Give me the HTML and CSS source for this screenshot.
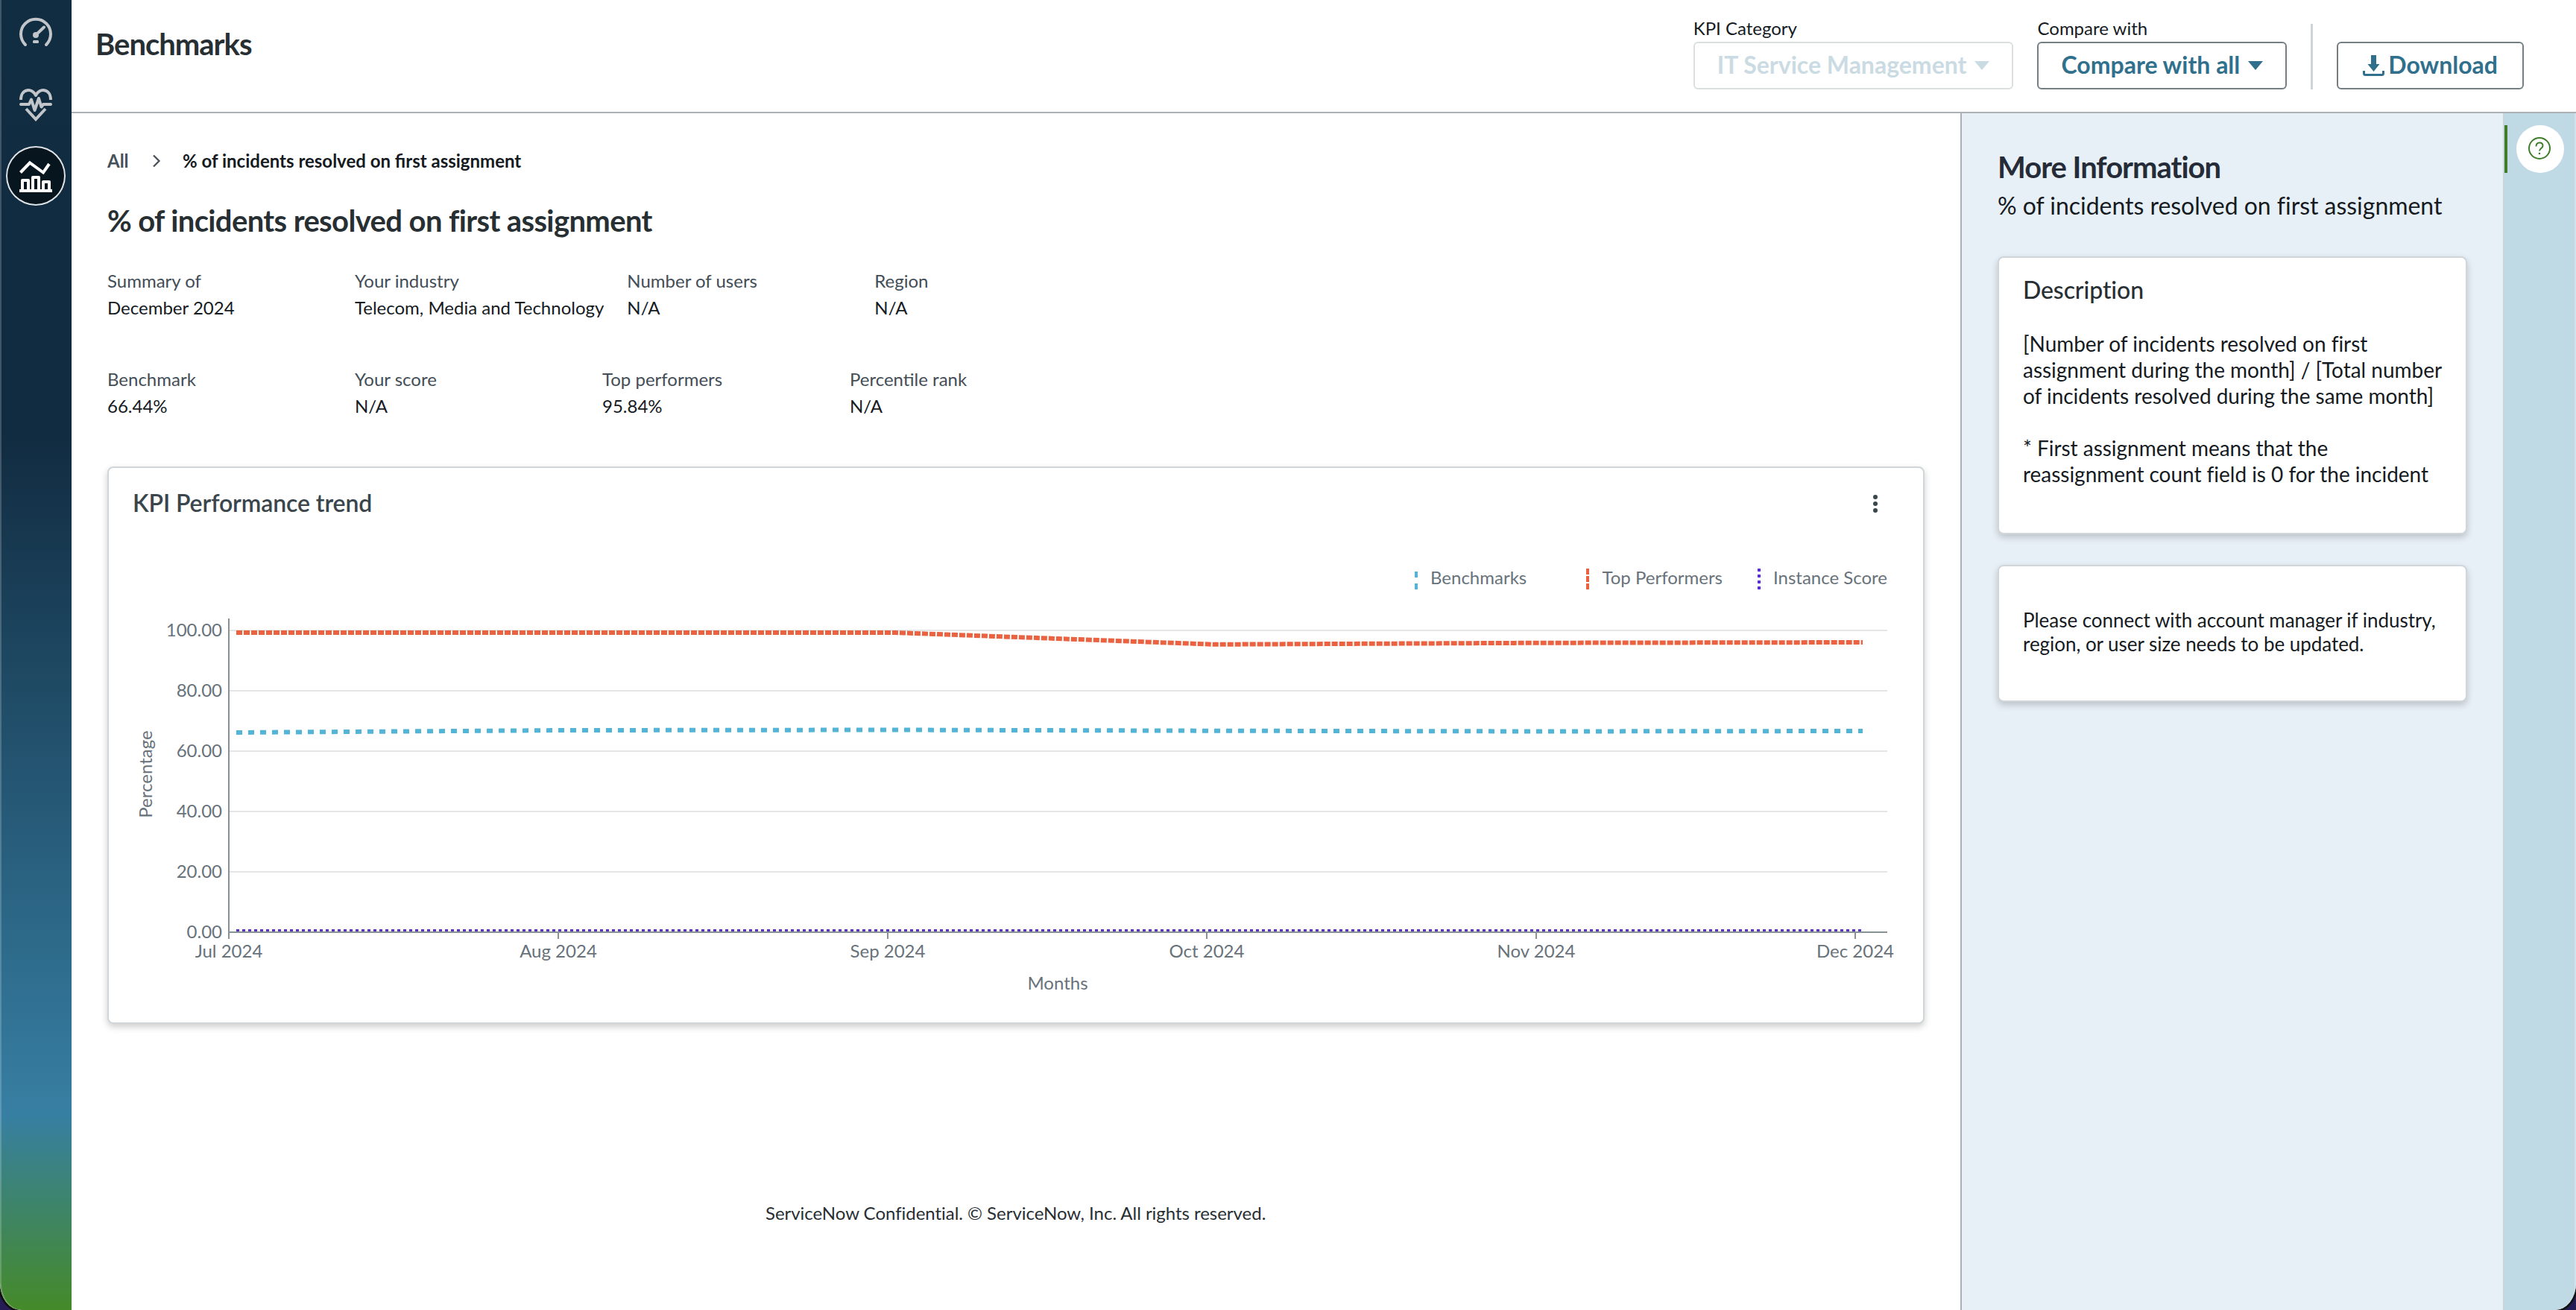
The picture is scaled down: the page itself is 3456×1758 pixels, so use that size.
FILE: index.html
```html
<!DOCTYPE html>
<html lang="en">
<head>
<meta charset="utf-8">
<title>Benchmarks</title>
<link rel="stylesheet" href="styles.css">
</head>
<body>
<div class="app">
  <nav class="sidebar">
    <a class="nav-item">
      <svg viewBox="0 0 80 80" fill="none" stroke="#c1c5ca" stroke-width="4" stroke-linecap="round">
        <path d="M26 56A20 20 0 1 1 54 56"/>
        <path d="M41 42L51 32.5"/>
        <circle cx="40" cy="43" r="4" fill="#c1c5ca" stroke="none"/>
        <rect x="36" y="50" width="8" height="4" rx="1.5" fill="#c1c5ca" stroke="none"/>
      </svg>
    </a>
    <a class="nav-item">
      <svg viewBox="0 0 80 80" fill="none" stroke="#c1c5ca" stroke-width="4" stroke-linejoin="round">
        <path d="M20 34C20 18 36 18 40 28C44 18 60 18 60 34"/>
        <path d="M20 40H31L34 33.5L38.5 48L44 32L47.5 43.5L50 40H60" stroke-linecap="round"/>
        <path d="M27 46L40 60L53 46" stroke-linejoin="miter"/>
      </svg>
    </a>
    <a class="nav-item nav-item-active">
      <svg viewBox="0 0 80 80" fill="none" stroke="#fff" stroke-width="4">
        <path d="M19.5 35.5L32 22.5L50 35.5L58 24"/>
        <path d="M18 60H62M22 60V46H30V60M36 60V42H44V60M50 60V48H58V60" stroke-linejoin="round"/>
      </svg>
    </a>
  </nav>

  <div class="page">
    <header class="topbar">
      <h1 class="topbar-title">Benchmarks</h1>
      <div class="controls">
        <div class="field">
          <span class="field-label">KPI Category</span>
          <button class="btn btn-disabled">IT Service Management<i class="caret"></i></button>
        </div>
        <div class="field">
          <span class="field-label">Compare with</span>
          <button class="btn">Compare with all<i class="caret"></i></button>
        </div>
        <span class="divider"></span>
        <button class="btn btn-download">
          <svg class="download-icon" viewBox="0 0 29 28"><path d="M11 0h7v12h4.5L14.5 22 6.500 12H11z" fill="currentColor"/><path d="M1.500 21v3.500q0 2 2 2h22q2 0 2-2V21" fill="none" stroke="currentColor" stroke-width="3"/></svg>
          Download
        </button>
      </div>
    </header>

    <div class="body">
      <main class="content">
        <div class="breadcrumb">
          <a class="crumb">All</a>
          <svg class="crumb-arrow" viewBox="0 0 12 18"><path d="M2 1.500L9.500 9 2 16.500" fill="none" stroke="#46505a" stroke-width="2.200"/></svg>
          <b>% of incidents resolved on first assignment</b>
        </div>
        <h2 class="kpi-title">% of incidents resolved on first assignment</h2>
        <div class="facts">
          <dl class="fact"><dt>Summary of</dt><dd>December 2024</dd></dl>
          <dl class="fact"><dt>Your industry</dt><dd>Telecom, Media and Technology</dd></dl>
          <dl class="fact"><dt>Number of users</dt><dd>N/A</dd></dl>
          <dl class="fact"><dt>Region</dt><dd>N/A</dd></dl>
        </div>
        <div class="facts">
          <dl class="fact"><dt>Benchmark</dt><dd>66.44%</dd></dl>
          <dl class="fact"><dt>Your score</dt><dd>N/A</dd></dl>
          <dl class="fact"><dt>Top performers</dt><dd>95.84%</dd></dl>
          <dl class="fact"><dt>Percentile rank</dt><dd>N/A</dd></dl>
        </div>

        <section class="card chart-card">
          <div class="chart-head">
            <h3 class="card-title">KPI Performance trend</h3>
            <svg class="kebab" viewBox="0 0 8 26" fill="#3a454c"><circle cx="4" cy="4" r="3"/><circle cx="4" cy="13" r="3"/><circle cx="4" cy="22" r="3"/></svg>
          </div>
          <svg class="chart" viewBox="146 730 2434 642">
            <g fill="none" stroke-width="4">
              <path d="M1900 791V766" stroke="#52b4d6" stroke-dasharray="8 8"/>
              <path d="M2130 791V762" stroke="#ec6240" stroke-dasharray="8 2"/>
              <path d="M2360 791V762" stroke="#5b30cf" stroke-dasharray="4 4"/>
            </g>
            <g class="chart-text">
              <text x="1919" y="784">Benchmarks</text>
              <text x="2149.500" y="784">Top Performers</text>
              <text x="2379" y="784">Instance Score</text>
            </g>
            <path d="M308 846H2532M308 927H2532M308 1008H2532M308 1089H2532M308 1170H2532" stroke="#e5e5e5" stroke-width="2"/>
            <g class="chart-text" text-anchor="end">
              <text x="298" y="854">100.00</text>
              <text x="298" y="935">80.00</text>
              <text x="298" y="1016">60.00</text>
              <text x="298" y="1097">40.00</text>
              <text x="298" y="1178">20.00</text>
              <text x="298" y="1259">0.00</text>
            </g>
            <g fill="none" stroke-width="6">
              <path d="M317 983L759 980L1201 979.500L1629 980.700L2071 981.500L2499 981" stroke="#52b4d6" stroke-dasharray="8 8"/>
              <path d="M317 849H1201L1629 864.800L2071 862.700L2499 862" stroke="#ec6240" stroke-dasharray="8 2"/>
              <path d="M317 1248.500H2499" stroke="#5b30cf" stroke-width="3" stroke-dasharray="4 4"/>
            </g>
            <path d="M307 830V1260M306 1251H2532M749 1252V1260M1191 1252V1260M1619 1252V1260M2061 1252V1260M2489 1252V1260" fill="none" stroke="#879196" stroke-width="2"/>
            <g class="chart-text" text-anchor="middle">
              <text x="307" y="1285">Jul 2024</text>
              <text x="749" y="1285">Aug 2024</text>
              <text x="1191" y="1285">Sep 2024</text>
              <text x="1619" y="1285">Oct 2024</text>
              <text x="2061" y="1285">Nov 2024</text>
              <text x="2489" y="1285">Dec 2024</text>
              <text x="1419" y="1328">Months</text>
              <text transform="translate(204 1039) rotate(-90)">Percentage</text>
            </g>
          </svg>
        </section>

        <footer class="footer">ServiceNow Confidential. © ServiceNow, Inc. All rights reserved.</footer>
      </main>

      <aside class="info">
        <h2 class="info-title">More Information</h2>
        <p class="info-sub">% of incidents resolved on first assignment</p>
        <section class="card info-card">
          <h3 class="card-title">Description</h3>
          <p class="desc">[Number of incidents resolved on first assignment during the month] / [Total number of incidents resolved during the same month]</p>
          <p class="desc">* First assignment means that the reassignment count field is 0 for the incident</p>
        </section>
        <section class="card note-card">
          <p class="note">Please connect with account manager if industry, region, or user size needs to be updated.</p>
        </section>
      </aside>

      <div class="rail">
        <span class="rail-mark"></span>
        <button class="rail-btn">
          <svg viewBox="0 0 64 64" fill="none" stroke="#3f7d2b" stroke-width="2">
            <circle cx="31" cy="31" r="14"/>
            <path d="M26.500 28.500Q26.500 23.500 31 23.500T35.500 27.800C35.500 31 31 31 31 34.500"/>
            <circle cx="31" cy="38" r="1.300" fill="#3f7d2b" stroke="none"/>
          </svg>
        </button>
      </div>
    </div>
  </div>
</div>
</body>
</html>
```
FILE: styles.css
```css
* { box-sizing: border-box; }
body, h1, h2, h3, p, dl, dt, dd { margin: 0; }
body {
  width: 3456px;
  height: 1758px;
  overflow: hidden;
  background: #251c55;
  font-family: Lato, "Liberation Sans", sans-serif;
  font-size: 24px;
  color: #161b1f;
}
svg { display: block; }

.app {
  display: flex;
  height: 1758px;
  border-radius: 0 0 28px 28px / 0 0 36px 36px;
  overflow: hidden;
  background: #fff;
  box-shadow: 0 0 0 3px #111;
}

.sidebar {
  width: 96px;
  flex: none;
  display: flex;
  flex-direction: column;
  align-items: center;
  gap: 16px;
  padding-top: 4px;
  border-radius: 0 0 0 28px / 0 0 0 36px;
  background: linear-gradient(#112d41, #112b40 33%, #377fa3 85%, #458a29);
  box-shadow: inset 2px 0 0 rgba(255, 255, 255, .2);
}
.nav-item { width: 80px; height: 80px; }
.nav-item-active {
  border-radius: 50%;
  background: #07151f;
  box-shadow: inset 0 0 0 2px #dde2e6;
}

.page { flex: 1; display: flex; flex-direction: column; }
.topbar {
  height: 152px;
  flex: none;
  display: flex;
  justify-content: space-between;
  padding: 21px 70px 0 32px;
  border-bottom: 2px solid #abb1b6;
}
.topbar-title {
  margin-top: 14px;
  font-size: 40px;
  line-height: 48px;
  letter-spacing: -1px;
  color: #272f33;
}
.controls { display: flex; gap: 32px; height: 99px; align-items: flex-end; }
.field { display: flex; flex-direction: column; gap: 2px; }
.field-label { line-height: 32px; }
.btn {
  display: flex;
  align-items: center;
  gap: 11px;
  height: 64px;
  padding: 0 30px 3px;
  border: 2px solid #747e83;
  border-radius: 6px;
  background: #fff;
  font: 700 32px Lato, "Liberation Sans", sans-serif;
  color: #30708c;
}
.btn-disabled { border-color: #dcdfe0; color: #cbdbe3; }
.caret {
  margin-top: 3px;
  border: 10px solid transparent;
  border-top: 12px solid currentColor;
  border-bottom: 0;
}
.btn-download { gap: 5px; padding-left: 33px; padding-right: 33px; }
.download-icon { width: 29px; height: 28px; margin-top: 3px; }
.divider { width: 3px; height: 88px; background: #d0d3d5; }

.body { flex: 1; display: flex; }
.content { flex: 1; padding: 48px 48px 0; }
.breadcrumb {
  display: flex;
  align-items: center;
  height: 32px;
  line-height: 32px;
}
.crumb { width: 60px; font-weight: 700; color: #46505a; }
.crumb-arrow { width: 12px; height: 18px; margin-right: 29px; }
.kpi-title {
  margin: 40px 0 39px;
  font-size: 40px;
  line-height: 48px;
  letter-spacing: -.62px;
  color: #272f33;
}
.facts { display: flex; gap: 31px; height: 132px; }
.fact { min-width: 301px; line-height: 36px; }
.fact dt { color: #434d56; }

.card {
  border: 2px solid #d0d6d9;
  border-radius: 8px;
  background: #fff;
  box-shadow: 0 4px 10px rgba(0, 0, 0, .2);
}
.card-title { font-size: 32px; line-height: 38px; font-weight: 600; color: #3a454c; }
.chart-card { width: 2438px; height: 748px; margin-top: 3px; }
.chart-head {
  height: 102px;
  display: flex;
  justify-content: space-between;
  padding: 28px 60px 0 32px;
}
.chart-head .card-title { letter-spacing: -.1px; }
.kebab { width: 8px; height: 26px; margin-top: 7px; }
.chart { width: 2434px; height: 642px; }
.chart-text { font-size: 24px; fill: #68727a; }
.footer { margin: 238px 0 0 883px; line-height: 32px; letter-spacing: -.03px; color: #272f33; }

.info {
  width: 728px;
  padding: 48px 46px 0 48px;
  border-left: 2px solid #abb1b6;
  background: #e8f0f7;
}
.info-title {
  font-size: 40px;
  line-height: 48px;
  letter-spacing: -1px;
  color: #252c38;
}
.info-sub { margin: 9px 0 49px; font-size: 32px; line-height: 38px; letter-spacing: -.03px; }
.info-card, .note-card { width: 630px; }
.info-card { height: 373px; padding: 24px 26px 0 32px; }
.info-card .card-title { font-weight: 500; color: #272f33; margin-bottom: 36px; letter-spacing: -.1px; }
.desc { margin-bottom: 35px; font-size: 28px; line-height: 35px; letter-spacing: -.03px; }
.note-card { height: 184px; margin-top: 41px; padding: 56px 26px 0 32px; }
.note { font-size: 26px; line-height: 32px; letter-spacing: -.04px; }

.rail {
  width: 98px;
  display: flex;
  align-items: flex-start;
  gap: 12px;
  padding-top: 16px;
  border-left: 2px solid #c6d6dc;
  background: #c0dae5;
  box-shadow: inset -2px 0 0 rgba(255, 255, 255, .25);
}
.rail-mark { width: 4px; height: 64px; background: #3f7d2b; }
.rail-btn { width: 64px; height: 64px; padding: 0; border: 0; border-radius: 50%; background: #fff; }
```
